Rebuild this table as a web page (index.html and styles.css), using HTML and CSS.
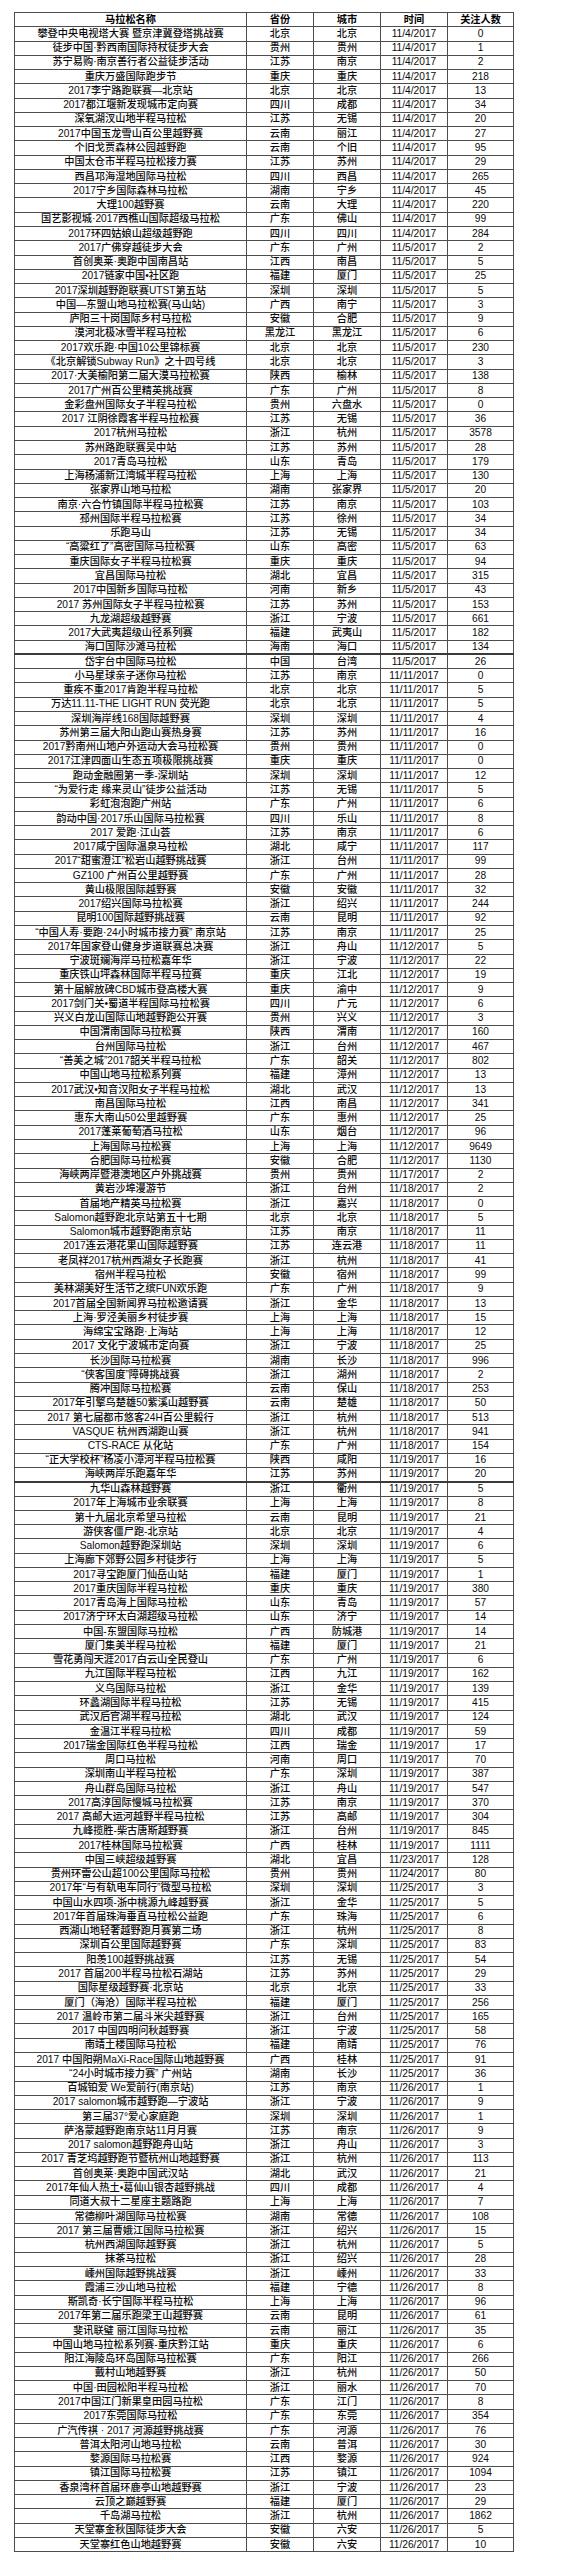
FILE: index.html
```html
<!DOCTYPE html>
<html lang="zh-CN">
<head>
<meta charset="utf-8">
<title>马拉松赛事列表</title>
<link rel="stylesheet" href="styles.css">
</head>
<body>
<table class="races">
<colgroup><col class="c-name"><col class="c-prov"><col class="c-city"><col class="c-date"><col class="c-num"></colgroup>
<thead>
<tr><th>马拉松名称</th><th>省份</th><th>城市</th><th>时间</th><th>关注人数</th></tr>
</thead>
<tbody>
<tr><td>攀登中央电视塔大赛 暨京津冀登塔挑战赛</td><td>北京</td><td>北京</td><td>11/4/2017</td><td>0</td></tr>
<tr><td>徒步中国·黔西南国际持杖徒步大会</td><td>贵州</td><td>贵州</td><td>11/4/2017</td><td>1</td></tr>
<tr><td>苏宁易购·南京善行者公益徒步活动</td><td>江苏</td><td>南京</td><td>11/4/2017</td><td>2</td></tr>
<tr><td>重庆万盛国际跑步节</td><td>重庆</td><td>重庆</td><td>11/4/2017</td><td>218</td></tr>
<tr><td>2017李宁路跑联赛—北京站</td><td>北京</td><td>北京</td><td>11/4/2017</td><td>13</td></tr>
<tr><td>2017都江堰新发现城市定向赛</td><td>四川</td><td>成都</td><td>11/4/2017</td><td>34</td></tr>
<tr><td>深氧湖汊山地半程马拉松</td><td>江苏</td><td>无锡</td><td>11/4/2017</td><td>20</td></tr>
<tr><td>2017中国玉龙雪山百公里越野赛</td><td>云南</td><td>丽江</td><td>11/4/2017</td><td>27</td></tr>
<tr><td>个旧戈贾森林公园越野跑</td><td>云南</td><td>个旧</td><td>11/4/2017</td><td>95</td></tr>
<tr><td>中国太仓市半程马拉松接力赛</td><td>江苏</td><td>苏州</td><td>11/4/2017</td><td>29</td></tr>
<tr><td>西昌邛海湿地国际马拉松</td><td>四川</td><td>西昌</td><td>11/4/2017</td><td>265</td></tr>
<tr><td>2017宁乡国际森林马拉松</td><td>湖南</td><td>宁乡</td><td>11/4/2017</td><td>45</td></tr>
<tr><td>大理100越野赛</td><td>云南</td><td>大理</td><td>11/4/2017</td><td>220</td></tr>
<tr><td>国艺影视城·2017西樵山国际超级马拉松</td><td>广东</td><td>佛山</td><td>11/4/2017</td><td>99</td></tr>
<tr><td>2017环四姑娘山超级越野跑</td><td>四川</td><td>四川</td><td>11/4/2017</td><td>284</td></tr>
<tr><td>2017广佛穿越徒步大会</td><td>广东</td><td>广州</td><td>11/5/2017</td><td>2</td></tr>
<tr><td>首创奥莱·奥跑中国南昌站</td><td>江西</td><td>南昌</td><td>11/5/2017</td><td>5</td></tr>
<tr><td>2017链家中国•社区跑</td><td>福建</td><td>厦门</td><td>11/5/2017</td><td>25</td></tr>
<tr><td>2017深圳越野跑联赛UTST第五站</td><td>深圳</td><td>深圳</td><td>11/5/2017</td><td>5</td></tr>
<tr><td>中国—东盟山地马拉松赛(马山站)</td><td>广西</td><td>南宁</td><td>11/5/2017</td><td>3</td></tr>
<tr><td>庐阳三十岗国际乡村马拉松</td><td>安徽</td><td>合肥</td><td>11/5/2017</td><td>9</td></tr>
<tr><td>漠河北极冰雪半程马拉松</td><td>黑龙江</td><td>黑龙江</td><td>11/5/2017</td><td>6</td></tr>
<tr><td>2017欢乐跑·中国10公里锦标赛</td><td>北京</td><td>北京</td><td>11/5/2017</td><td>230</td></tr>
<tr><td>《北京解锁Subway Run》之十四号线</td><td>北京</td><td>北京</td><td>11/5/2017</td><td>3</td></tr>
<tr><td>2017·大美榆阳第二届大漠马拉松赛</td><td>陕西</td><td>榆林</td><td>11/5/2017</td><td>138</td></tr>
<tr><td>2017广州百公里精英挑战赛</td><td>广东</td><td>广州</td><td>11/5/2017</td><td>8</td></tr>
<tr><td>金彩盘州国际女子半程马拉松</td><td>贵州</td><td>六盘水</td><td>11/5/2017</td><td>0</td></tr>
<tr><td>2017 江阴徐霞客半程马拉松赛</td><td>江苏</td><td>无锡</td><td>11/5/2017</td><td>36</td></tr>
<tr><td>2017杭州马拉松</td><td>浙江</td><td>杭州</td><td>11/5/2017</td><td>3578</td></tr>
<tr><td>苏州路跑联赛吴中站</td><td>江苏</td><td>苏州</td><td>11/5/2017</td><td>28</td></tr>
<tr><td>2017青岛马拉松</td><td>山东</td><td>青岛</td><td>11/5/2017</td><td>179</td></tr>
<tr><td>上海杨浦新江湾城半程马拉松</td><td>上海</td><td>上海</td><td>11/5/2017</td><td>130</td></tr>
<tr><td>张家界山地马拉松</td><td>湖南</td><td>张家界</td><td>11/5/2017</td><td>20</td></tr>
<tr><td>南京·六合竹镇国际半程马拉松赛</td><td>江苏</td><td>南京</td><td>11/5/2017</td><td>103</td></tr>
<tr><td>邳州国际半程马拉松赛</td><td>江苏</td><td>徐州</td><td>11/5/2017</td><td>34</td></tr>
<tr><td>乐跑马山</td><td>江苏</td><td>无锡</td><td>11/5/2017</td><td>34</td></tr>
<tr><td>“高粱红了”高密国际马拉松赛</td><td>山东</td><td>高密</td><td>11/5/2017</td><td>63</td></tr>
<tr><td>重庆国际女子半程马拉松赛</td><td>重庆</td><td>重庆</td><td>11/5/2017</td><td>94</td></tr>
<tr><td>宜昌国际马拉松</td><td>湖北</td><td>宜昌</td><td>11/5/2017</td><td>315</td></tr>
<tr><td>2017中国新乡国际马拉松</td><td>河南</td><td>新乡</td><td>11/5/2017</td><td>43</td></tr>
<tr><td>2017 苏州国际女子半程马拉松赛</td><td>江苏</td><td>苏州</td><td>11/5/2017</td><td>153</td></tr>
<tr><td>九龙湖超级越野赛</td><td>浙江</td><td>宁波</td><td>11/5/2017</td><td>661</td></tr>
<tr><td>2017大武夷超级山径系列赛</td><td>福建</td><td>武夷山</td><td>11/5/2017</td><td>182</td></tr>
<tr><td>海口国际沙滩马拉松</td><td>海南</td><td>海口</td><td>11/5/2017</td><td>134</td></tr>
<tr class="sep"><td>岱宇台中国际马拉松</td><td>中国</td><td>台湾</td><td>11/5/2017</td><td>26</td></tr>
<tr><td>小马星球亲子迷你马拉松</td><td>江苏</td><td>南京</td><td>11/11/2017</td><td>0</td></tr>
<tr><td>重疾不重2017肯跑半程马拉松</td><td>北京</td><td>北京</td><td>11/11/2017</td><td>5</td></tr>
<tr><td>万达11.11-THE LIGHT RUN 荧光跑</td><td>北京</td><td>北京</td><td>11/11/2017</td><td>5</td></tr>
<tr><td>深圳海岸线168国际越野赛</td><td>深圳</td><td>深圳</td><td>11/11/2017</td><td>4</td></tr>
<tr><td>苏州第三届大阳山跑山赛热身赛</td><td>江苏</td><td>苏州</td><td>11/11/2017</td><td>16</td></tr>
<tr><td>2017黔南州山地户外运动大会马拉松赛</td><td>贵州</td><td>贵州</td><td>11/11/2017</td><td>0</td></tr>
<tr><td>2017江津四面山生态五项极限挑战赛</td><td>重庆</td><td>重庆</td><td>11/11/2017</td><td>0</td></tr>
<tr><td>跑动金融圈第一季-深圳站</td><td>深圳</td><td>深圳</td><td>11/11/2017</td><td>12</td></tr>
<tr><td>“为爱行走 缘来灵山”徒步公益活动</td><td>江苏</td><td>无锡</td><td>11/11/2017</td><td>5</td></tr>
<tr><td>彩虹泡泡跑广州站</td><td>广东</td><td>广州</td><td>11/11/2017</td><td>6</td></tr>
<tr><td>韵动中国·2017乐山国际马拉松赛</td><td>四川</td><td>乐山</td><td>11/11/2017</td><td>8</td></tr>
<tr><td>2017 爱跑·江山荟</td><td>江苏</td><td>南京</td><td>11/11/2017</td><td>6</td></tr>
<tr><td>2017咸宁国际温泉马拉松</td><td>湖北</td><td>咸宁</td><td>11/11/2017</td><td>117</td></tr>
<tr><td>2017“甜蜜澄江”松岩山越野挑战赛</td><td>浙江</td><td>台州</td><td>11/11/2017</td><td>99</td></tr>
<tr><td>GZ100 广州百公里越野赛</td><td>广东</td><td>广州</td><td>11/11/2017</td><td>28</td></tr>
<tr><td>黄山极限国际越野赛</td><td>安徽</td><td>安徽</td><td>11/11/2017</td><td>32</td></tr>
<tr><td>2017绍兴国际马拉松赛</td><td>浙江</td><td>绍兴</td><td>11/11/2017</td><td>244</td></tr>
<tr><td>昆明100国际越野挑战赛</td><td>云南</td><td>昆明</td><td>11/11/2017</td><td>92</td></tr>
<tr><td>“中国人寿·要跑·24小时城市接力赛” 南京站</td><td>江苏</td><td>南京</td><td>11/11/2017</td><td>25</td></tr>
<tr><td>2017年国家登山健身步道联赛总决赛</td><td>浙江</td><td>舟山</td><td>11/12/2017</td><td>5</td></tr>
<tr><td>宁波斑斓海岸马拉松嘉年华</td><td>浙江</td><td>宁波</td><td>11/12/2017</td><td>22</td></tr>
<tr><td>重庆铁山坪森林国际半程马拉赛</td><td>重庆</td><td>江北</td><td>11/12/2017</td><td>19</td></tr>
<tr><td>第十届解放碑CBD城市登高楼大赛</td><td>重庆</td><td>渝中</td><td>11/12/2017</td><td>9</td></tr>
<tr><td>2017剑门关•蜀道半程国际马拉松赛</td><td>四川</td><td>广元</td><td>11/12/2017</td><td>6</td></tr>
<tr><td>兴义白龙山国际山地越野跑公开赛</td><td>贵州</td><td>兴义</td><td>11/12/2017</td><td>3</td></tr>
<tr><td>中国渭南国际马拉松赛</td><td>陕西</td><td>渭南</td><td>11/12/2017</td><td>160</td></tr>
<tr><td>台州国际马拉松</td><td>浙江</td><td>台州</td><td>11/12/2017</td><td>467</td></tr>
<tr><td>“善美之城”2017韶关半程马拉松</td><td>广东</td><td>韶关</td><td>11/12/2017</td><td>802</td></tr>
<tr><td>中国山地马拉松系列赛</td><td>福建</td><td>漳州</td><td>11/12/2017</td><td>13</td></tr>
<tr><td>2017武汉•知音汉阳女子半程马拉松</td><td>湖北</td><td>武汉</td><td>11/12/2017</td><td>13</td></tr>
<tr><td>南昌国际马拉松</td><td>江西</td><td>南昌</td><td>11/12/2017</td><td>341</td></tr>
<tr><td>惠东大南山50公里越野赛</td><td>广东</td><td>惠州</td><td>11/12/2017</td><td>25</td></tr>
<tr><td>2017蓬莱葡萄酒马拉松</td><td>山东</td><td>烟台</td><td>11/12/2017</td><td>96</td></tr>
<tr><td>上海国际马拉松赛</td><td>上海</td><td>上海</td><td>11/12/2017</td><td>9649</td></tr>
<tr><td>合肥国际马拉松赛</td><td>安徽</td><td>合肥</td><td>11/12/2017</td><td>1130</td></tr>
<tr><td>海峡两岸暨港澳地区户外挑战赛</td><td>贵州</td><td>贵州</td><td>11/17/2017</td><td>2</td></tr>
<tr><td>黄岩沙埠漫游节</td><td>浙江</td><td>台州</td><td>11/18/2017</td><td>2</td></tr>
<tr><td>首届地产精英马拉松赛</td><td>浙江</td><td>嘉兴</td><td>11/18/2017</td><td>0</td></tr>
<tr><td>Salomon越野跑北京站第五十七期</td><td>北京</td><td>北京</td><td>11/18/2017</td><td>5</td></tr>
<tr><td>Salomon城市越野跑南京站</td><td>江苏</td><td>南京</td><td>11/18/2017</td><td>11</td></tr>
<tr><td>2017连云港花果山国际越野赛</td><td>江苏</td><td>连云港</td><td>11/18/2017</td><td>11</td></tr>
<tr><td>老凤祥2017杭州西湖女子长跑赛</td><td>浙江</td><td>杭州</td><td>11/18/2017</td><td>41</td></tr>
<tr><td>宿州半程马拉松</td><td>安徽</td><td>宿州</td><td>11/18/2017</td><td>99</td></tr>
<tr><td>美林湖美好生活节之缤FUN欢乐跑</td><td>广东</td><td>广州</td><td>11/18/2017</td><td>9</td></tr>
<tr><td>2017首届全国新闻界马拉松邀请赛</td><td>浙江</td><td>金华</td><td>11/18/2017</td><td>13</td></tr>
<tr><td>上海·罗泾美丽乡村徒步赛</td><td>上海</td><td>上海</td><td>11/18/2017</td><td>15</td></tr>
<tr><td>海绵宝宝路跑·上海站</td><td>上海</td><td>上海</td><td>11/18/2017</td><td>12</td></tr>
<tr><td>2017 文化宁波城市定向赛</td><td>浙江</td><td>宁波</td><td>11/18/2017</td><td>25</td></tr>
<tr><td>长沙国际马拉松赛</td><td>湖南</td><td>长沙</td><td>11/18/2017</td><td>996</td></tr>
<tr><td>“侠客国度”障碍挑战赛</td><td>浙江</td><td>湖州</td><td>11/18/2017</td><td>2</td></tr>
<tr><td>腾冲国际马拉松赛</td><td>云南</td><td>保山</td><td>11/18/2017</td><td>253</td></tr>
<tr><td>2017年引擎鸟楚雄50紫溪山越野赛</td><td>云南</td><td>楚雄</td><td>11/18/2017</td><td>50</td></tr>
<tr><td>2017 第七届都市悠客24H百公里毅行</td><td>浙江</td><td>杭州</td><td>11/18/2017</td><td>513</td></tr>
<tr><td>VASQUE 杭州西湖跑山赛</td><td>浙江</td><td>杭州</td><td>11/18/2017</td><td>941</td></tr>
<tr><td>CTS-RACE 从化站</td><td>广东</td><td>广州</td><td>11/18/2017</td><td>154</td></tr>
<tr><td>“正大学校杯”杨凌小漳河半程马拉松赛</td><td>陕西</td><td>咸阳</td><td>11/19/2017</td><td>16</td></tr>
<tr><td>海峡两岸乐跑嘉年华</td><td>江苏</td><td>苏州</td><td>11/19/2017</td><td>20</td></tr>
<tr class="sep"><td>九华山森林越野赛</td><td>浙江</td><td>衢州</td><td>11/19/2017</td><td>5</td></tr>
<tr><td>2017年上海城市业余联赛</td><td>上海</td><td>上海</td><td>11/19/2017</td><td>8</td></tr>
<tr><td>第十九届北京希望马拉松</td><td>云南</td><td>昆明</td><td>11/19/2017</td><td>21</td></tr>
<tr><td>游侠客僵尸跑-北京站</td><td>北京</td><td>北京</td><td>11/19/2017</td><td>4</td></tr>
<tr><td>Salomon越野跑深圳站</td><td>深圳</td><td>深圳</td><td>11/19/2017</td><td>6</td></tr>
<tr><td>上海廊下郊野公园乡村徒步行</td><td>上海</td><td>上海</td><td>11/19/2017</td><td>5</td></tr>
<tr><td>2017寻宝跑厦门仙岳山站</td><td>福建</td><td>厦门</td><td>11/19/2017</td><td>1</td></tr>
<tr><td>2017重庆国际半程马拉松</td><td>重庆</td><td>重庆</td><td>11/19/2017</td><td>380</td></tr>
<tr><td>2017青岛海上国际马拉松</td><td>山东</td><td>青岛</td><td>11/19/2017</td><td>57</td></tr>
<tr><td>2017济宁环太白湖超级马拉松</td><td>山东</td><td>济宁</td><td>11/19/2017</td><td>14</td></tr>
<tr><td>中国-东盟国际马拉松</td><td>广西</td><td>防城港</td><td>11/19/2017</td><td>14</td></tr>
<tr><td>厦门集美半程马拉松</td><td>福建</td><td>厦门</td><td>11/19/2017</td><td>21</td></tr>
<tr><td>雪花勇闯天涯2017白云山全民登山</td><td>广东</td><td>广州</td><td>11/19/2017</td><td>6</td></tr>
<tr><td>九江国际半程马拉松</td><td>江西</td><td>九江</td><td>11/19/2017</td><td>162</td></tr>
<tr><td>义乌国际马拉松</td><td>浙江</td><td>金华</td><td>11/19/2017</td><td>139</td></tr>
<tr><td>环蠡湖国际半程马拉松</td><td>江苏</td><td>无锡</td><td>11/19/2017</td><td>415</td></tr>
<tr><td>武汉后官湖半程马拉松</td><td>湖北</td><td>武汉</td><td>11/19/2017</td><td>124</td></tr>
<tr><td>金温江半程马拉松</td><td>四川</td><td>成都</td><td>11/19/2017</td><td>59</td></tr>
<tr><td>2017瑞金国际红色半程马拉松</td><td>江西</td><td>瑞金</td><td>11/19/2017</td><td>17</td></tr>
<tr><td>周口马拉松</td><td>河南</td><td>周口</td><td>11/19/2017</td><td>70</td></tr>
<tr><td>深圳南山半程马拉松</td><td>广东</td><td>深圳</td><td>11/19/2017</td><td>387</td></tr>
<tr><td>舟山群岛国际马拉松</td><td>浙江</td><td>舟山</td><td>11/19/2017</td><td>547</td></tr>
<tr><td>2017高淳国际慢城马拉松赛</td><td>江苏</td><td>南京</td><td>11/19/2017</td><td>370</td></tr>
<tr><td>2017 高邮大运河越野半程马拉松</td><td>江苏</td><td>高邮</td><td>11/19/2017</td><td>304</td></tr>
<tr><td>九峰揽胜-柴古唐斯越野赛</td><td>浙江</td><td>台州</td><td>11/19/2017</td><td>845</td></tr>
<tr><td>2017桂林国际马拉松赛</td><td>广西</td><td>桂林</td><td>11/19/2017</td><td>1111</td></tr>
<tr><td>中国三峡超级越野赛</td><td>湖北</td><td>宜昌</td><td>11/23/2017</td><td>128</td></tr>
<tr><td>贵州环雷公山超100公里国际马拉松</td><td>贵州</td><td>贵州</td><td>11/24/2017</td><td>80</td></tr>
<tr><td>2017年“与有轨电车同行”微型马拉松</td><td>深圳</td><td>深圳</td><td>11/25/2017</td><td>3</td></tr>
<tr><td>中国山水四项-浙中桃源九峰越野赛</td><td>浙江</td><td>金华</td><td>11/25/2017</td><td>5</td></tr>
<tr><td>2017年首届珠海垂直马拉松公益跑</td><td>广东</td><td>珠海</td><td>11/25/2017</td><td>6</td></tr>
<tr><td>西湖山地轻奢越野跑月赛第二场</td><td>浙江</td><td>杭州</td><td>11/25/2017</td><td>8</td></tr>
<tr><td>深圳百公里国际越野赛</td><td>广东</td><td>深圳</td><td>11/25/2017</td><td>83</td></tr>
<tr><td>阳羡100越野挑战赛</td><td>江苏</td><td>无锡</td><td>11/25/2017</td><td>54</td></tr>
<tr><td>2017 首届200半程马拉松石湖站</td><td>江苏</td><td>苏州</td><td>11/25/2017</td><td>29</td></tr>
<tr><td>国际星级越野赛·北京站</td><td>北京</td><td>北京</td><td>11/25/2017</td><td>33</td></tr>
<tr><td>厦门（海沧）国际半程马拉松</td><td>福建</td><td>厦门</td><td>11/25/2017</td><td>256</td></tr>
<tr><td>2017 温岭市第二届斗米尖越野赛</td><td>浙江</td><td>台州</td><td>11/25/2017</td><td>165</td></tr>
<tr><td>2017 中国四明问秋越野赛</td><td>浙江</td><td>宁波</td><td>11/25/2017</td><td>58</td></tr>
<tr><td>南靖土楼国际马拉松</td><td>福建</td><td>南靖</td><td>11/25/2017</td><td>76</td></tr>
<tr><td>2017 中国阳朔MaXi-Race国际山地越野赛</td><td>广西</td><td>桂林</td><td>11/25/2017</td><td>91</td></tr>
<tr><td>“24小时城市接力赛” 广州站</td><td>湖南</td><td>长沙</td><td>11/25/2017</td><td>36</td></tr>
<tr><td>百城铂爱 We爱前行(南京站)</td><td>江苏</td><td>南京</td><td>11/26/2017</td><td>1</td></tr>
<tr><td>2017 salomon城市越野跑—宁波站</td><td>浙江</td><td>宁波</td><td>11/26/2017</td><td>9</td></tr>
<tr><td>第三届37°爱心家庭跑</td><td>深圳</td><td>深圳</td><td>11/26/2017</td><td>1</td></tr>
<tr><td>萨洛蒙越野跑南京站11月月赛</td><td>江苏</td><td>南京</td><td>11/26/2017</td><td>9</td></tr>
<tr><td>2017 salomon越野跑舟山站</td><td>浙江</td><td>舟山</td><td>11/26/2017</td><td>3</td></tr>
<tr><td>2017 青芝坞越野跑节暨杭州山地越野赛</td><td>浙江</td><td>杭州</td><td>11/26/2017</td><td>113</td></tr>
<tr><td>首创奥莱·奥跑中国武汉站</td><td>湖北</td><td>武汉</td><td>11/26/2017</td><td>21</td></tr>
<tr><td>2017年仙人热土•葛仙山银杏越野挑战</td><td>四川</td><td>成都</td><td>11/26/2017</td><td>4</td></tr>
<tr><td>同道大叔十二星座主题路跑</td><td>上海</td><td>上海</td><td>11/26/2017</td><td>7</td></tr>
<tr><td>常德柳叶湖国际马拉松赛</td><td>湖南</td><td>常德</td><td>11/26/2017</td><td>108</td></tr>
<tr><td>2017 第三届曹娥江国际马拉松赛</td><td>浙江</td><td>绍兴</td><td>11/26/2017</td><td>15</td></tr>
<tr><td>杭州西湖国际越野赛</td><td>浙江</td><td>杭州</td><td>11/26/2017</td><td>5</td></tr>
<tr><td>抹茶马拉松</td><td>浙江</td><td>绍兴</td><td>11/26/2017</td><td>28</td></tr>
<tr><td>嵊州国际越野挑战赛</td><td>浙江</td><td>嵊州</td><td>11/26/2017</td><td>33</td></tr>
<tr><td>霞浦三沙山地马拉松</td><td>福建</td><td>宁德</td><td>11/26/2017</td><td>8</td></tr>
<tr><td>斯凯奇·长宁国际半程马拉松</td><td>上海</td><td>上海</td><td>11/26/2017</td><td>96</td></tr>
<tr><td>2017年第二届乐跑梁王山越野赛</td><td>云南</td><td>昆明</td><td>11/26/2017</td><td>61</td></tr>
<tr><td>斐讯联璧 丽江国际马拉松</td><td>云南</td><td>丽江</td><td>11/26/2017</td><td>35</td></tr>
<tr><td>中国山地马拉松系列赛-重庆黔江站</td><td>重庆</td><td>重庆</td><td>11/26/2017</td><td>6</td></tr>
<tr><td>阳江海陵岛环岛国际马拉松赛</td><td>广东</td><td>阳江</td><td>11/26/2017</td><td>266</td></tr>
<tr><td>戴村山地越野赛</td><td>浙江</td><td>杭州</td><td>11/26/2017</td><td>50</td></tr>
<tr><td>中国·田园松阳半程马拉松</td><td>浙江</td><td>丽水</td><td>11/26/2017</td><td>70</td></tr>
<tr><td>2017中国江门新果皇田园马拉松</td><td>广东</td><td>江门</td><td>11/26/2017</td><td>8</td></tr>
<tr><td>2017东莞国际马拉松</td><td>广东</td><td>东莞</td><td>11/26/2017</td><td>354</td></tr>
<tr><td>广汽传祺 · 2017 河源越野挑战赛</td><td>广东</td><td>河源</td><td>11/26/2017</td><td>76</td></tr>
<tr><td>普洱太阳河山地马拉松</td><td>云南</td><td>普洱</td><td>11/26/2017</td><td>30</td></tr>
<tr><td>婺源国际马拉松赛</td><td>江西</td><td>婺源</td><td>11/26/2017</td><td>924</td></tr>
<tr><td>镇江国际马拉松赛</td><td>江苏</td><td>镇江</td><td>11/26/2017</td><td>1094</td></tr>
<tr><td>香泉湾杯首届环鹿亭山地越野赛</td><td>浙江</td><td>宁波</td><td>11/26/2017</td><td>23</td></tr>
<tr><td>云顶之巅越野赛</td><td>福建</td><td>厦门</td><td>11/26/2017</td><td>29</td></tr>
<tr><td>千岛湖马拉松</td><td>浙江</td><td>杭州</td><td>11/26/2017</td><td>1862</td></tr>
<tr><td>天堂寨金秋国际徒步大会</td><td>安徽</td><td>六安</td><td>11/26/2017</td><td>5</td></tr>
<tr><td>天堂寨红色山地越野赛</td><td>安徽</td><td>六安</td><td>11/26/2017</td><td>10</td></tr>
</tbody>
</table>
</body>
</html>
```

FILE: styles.css
```css
html, body {
  margin: 0;
  padding: 0;
  background: #ffffff;
}

body {
  padding: 12px 0 0 14px;
  font-family: "Liberation Sans", "Noto Sans CJK SC", sans-serif;
  font-size: 10.2px;
  font-weight: 500;
  color: #0a0a0a;
}

.races {
  border-collapse: collapse;
  table-layout: fixed;
  width: 499px;
  border: 1.5px solid #2a2a2a;
}

.c-name { width: 232px; }
.c-prov { width: 67px; }
.c-city { width: 67px; }
.c-date { width: 67px; }
.c-num  { width: 66px; }

.races tr {
  height: 14.27px;
}

.races th,
.races td {
  border: 1px solid #4d4d4d;
  padding: 0 1px;
  text-align: center;
  vertical-align: middle;
  line-height: 12px;
  white-space: nowrap;
  overflow: hidden;
}

.races th {
  font-weight: bold;
  color: #000000;
}

.races tr.sep td {
  border-top: 2px solid #3a3a3a;
}
```
